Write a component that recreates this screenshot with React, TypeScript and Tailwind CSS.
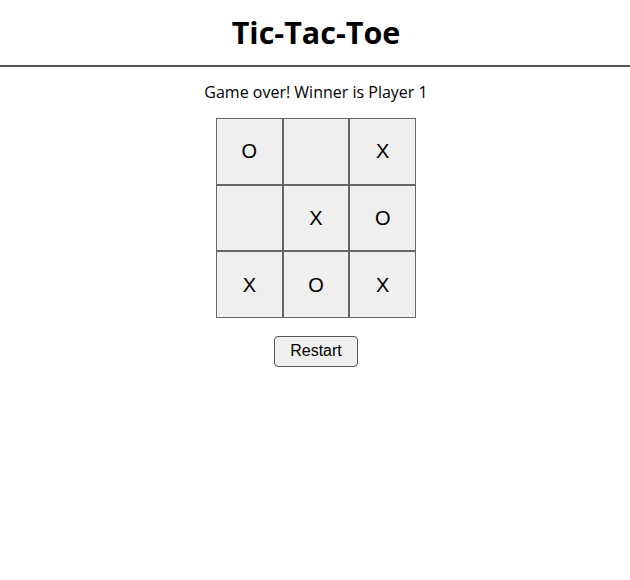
import { useState } from 'react';

type Cell = 'X' | 'O' | null;

const initialBoard: Cell[] = ['O', null, 'X', null, 'X', 'O', 'X', 'O', 'X'];

export default function App() {
  const [board, setBoard] = useState<Cell[]>(initialBoard);
  const [winner, setWinner] = useState<string | null>('Player 1');

  const restart = () => {
    setBoard(Array(9).fill(null));
    setWinner(null);
  };

  return (
    <div className="min-h-screen bg-white pl-[2px] text-black font-['Open_Sans',sans-serif]">
      <header className="-ml-[2px] border-b-2 border-[#555] pt-[12px] pb-[13px] pl-[2px]">
        <h1 className="text-center text-[30.5px] font-bold leading-[40px]">Tic-Tac-Toe</h1>
      </header>

      <div className="flex flex-col items-center">
        <p className="mt-[14px] text-[16px] leading-[22px]">
          {winner ? `Game over! Winner is ${winner}` : 'Next player: Player 1'}
        </p>

        <div className="mt-[15px] grid w-[200px] grid-cols-3">
          {board.map((cell, i) => (
            <button
              key={i}
              className="flex h-[66.67px] items-center justify-center border border-[#666] bg-[#efefef] font-['Liberation_Sans',Arial,sans-serif] text-[20px] text-black"
            >
              {cell}
            </button>
          ))}
        </div>

        <button
          onClick={restart}
          className="mt-[18px] h-[31px] w-[84px] rounded-[4px] border border-[#555] bg-[#efefef] font-['Liberation_Sans',Arial,sans-serif] text-[16px] text-black"
        >
          Restart
        </button>
      </div>
    </div>
  );
}
